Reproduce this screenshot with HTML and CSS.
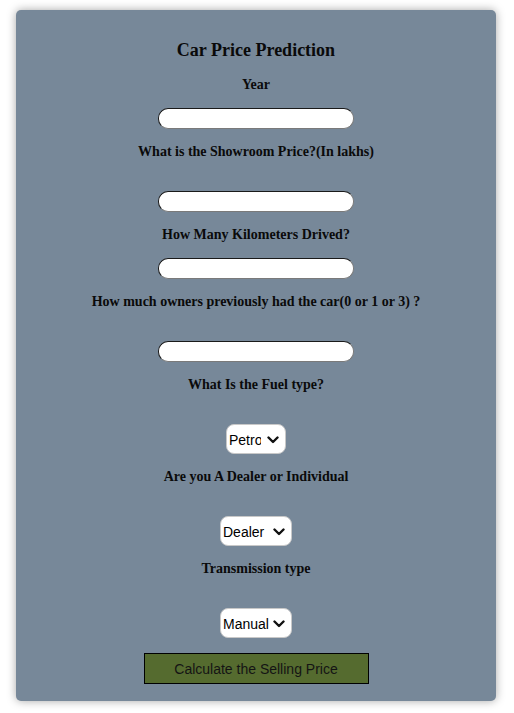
FILE: index.html
```html
<!DOCTYPE html>
<html>
<head>
<meta charset="utf-8">
<title>Car Price Prediction</title>
<link rel="stylesheet" href="styles.css">
</head>
<body>
<div class="card">
  <form class="form">
    <h3 class="title">Car Price Prediction</h3>
    <label class="label">Year</label>
    <input class="field" type="text">
    <label class="label tall">What is the Showroom Price?(In lakhs)</label>
    <input class="field" type="text">
    <label class="label">How Many Kilometers Drived?</label>
    <input class="field" type="text">
    <label class="label tall">How much owners previously had the car(0 or 1 or 3) ?</label>
    <input class="field" type="text">
    <label class="label tall">What Is the Fuel type?</label>
    <span class="choice-wrap">
      <select class="choice choice-fuel">
        <option>Petrol</option>
        <option>Diesel</option>
        <option>CNG</option>
      </select>
      <svg class="chev" width="12" height="8" viewBox="0 0 12 8"><path d="M1.5 1.5 L6 6 L10.5 1.5" fill="none" stroke="#111" stroke-width="2.4" stroke-linecap="round" stroke-linejoin="round"/></svg>
    </span>
    <label class="label tall">Are you A Dealer or Individual</label>
    <span class="choice-wrap">
      <select class="choice choice-wide">
        <option>Dealer</option>
        <option>Individual</option>
      </select>
      <svg class="chev" width="12" height="8" viewBox="0 0 12 8"><path d="M1.5 1.5 L6 6 L10.5 1.5" fill="none" stroke="#111" stroke-width="2.4" stroke-linecap="round" stroke-linejoin="round"/></svg>
    </span>
    <label class="label tall">Transmission type</label>
    <span class="choice-wrap">
      <select class="choice choice-wide">
        <option>Manual</option>
        <option>Automatic</option>
      </select>
      <svg class="chev" width="12" height="8" viewBox="0 0 12 8"><path d="M1.5 1.5 L6 6 L10.5 1.5" fill="none" stroke="#111" stroke-width="2.4" stroke-linecap="round" stroke-linejoin="round"/></svg>
    </span>
    <button class="submit" type="button">Calculate the Selling Price</button>
  </form>
</div>
</body>
</html>
```

FILE: styles.css
```css
html, body {
  margin: 0;
  padding: 0;
  background: #ffffff;
}
body {
  padding: 10px 16px;
  font-family: "Liberation Serif", "Times New Roman", serif;
}
.card {
  width: 480px;
  box-sizing: border-box;
  background: #778899;
  border-radius: 5px;
  box-shadow: 0 0 10px rgba(0, 0, 0, 0.35);
  padding: 29px 0 17px;
}
.form {
  display: flex;
  flex-direction: column;
  align-items: center;
  gap: 15px;
}
.title {
  margin: 0;
  font-size: 18px;
  line-height: 23px;
  font-weight: bold;
  color: #0a0a0a;
}
.label {
  display: block;
  font-size: 14px;
  line-height: 16px;
  font-weight: bold;
  color: #0a0a0a;
}
.label.tall {
  margin-bottom: 16px;
}
.field {
  width: 196px;
  height: 21px;
  box-sizing: border-box;
  border-radius: 10px;
  border: 1px solid;
  border-color: #1a1a1a #7a7a7a #7a7a7a #1a1a1a;
  background: #fff;
  margin: 0;
}
.choice-wrap {
  position: relative;
  display: inline-flex;
}
.choice {
  -webkit-appearance: none;
  appearance: none;
  height: 30px;
  box-sizing: border-box;
  border-radius: 8px;
  border: 1px solid #c8c8c8;
  background: #fff;
  font-family: "Liberation Sans", Arial, sans-serif;
  font-size: 14px;
  color: #000;
  margin: 0;
  padding: 1px 22px 0 2px;
  outline: none;
}
.choice-fuel {
  width: 60px;
  padding-right: 24px;
}
.choice-wide {
  width: 72px;
}
.chev {
  position: absolute;
  right: 7px;
  top: 12px;
  pointer-events: none;
}
.submit {
  width: 225px;
  height: 31px;
  box-sizing: border-box;
  margin: 0;
  background: #556b2f;
  border: 1px solid #000;
  font-family: "Liberation Sans", Arial, sans-serif;
  font-size: 14px;
  color: #141414;
}
```
